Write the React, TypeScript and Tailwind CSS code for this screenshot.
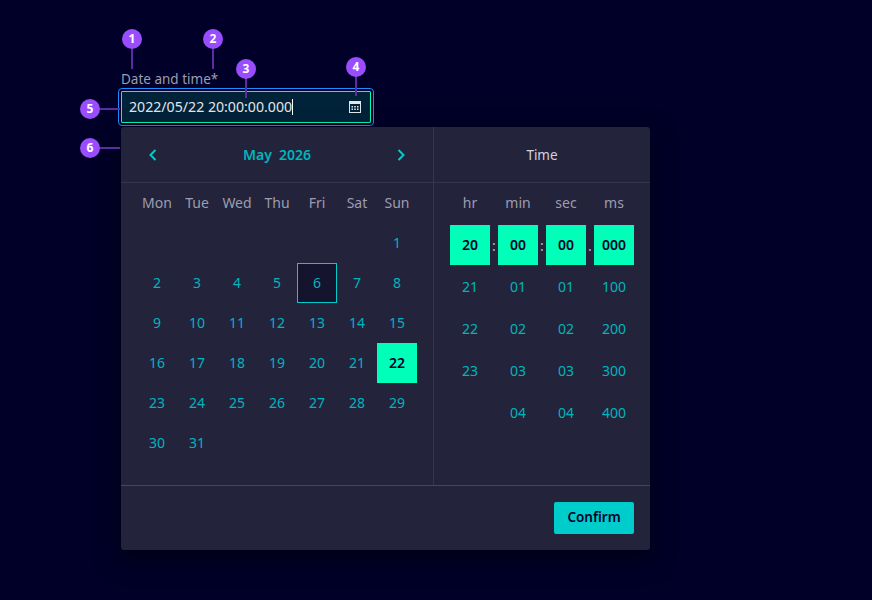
const days = ["Mon", "Tue", "Wed", "Thu", "Fri", "Sat", "Sun"];

const weeks = [
  ["", "", "", "", "", "", "1"],
  ["2", "3", "4", "5", "6", "7", "8"],
  ["9", "10", "11", "12", "13", "14", "15"],
  ["16", "17", "18", "19", "20", "21", "22"],
  ["23", "24", "25", "26", "27", "28", "29"],
  ["30", "31", "", "", "", "", ""],
];

const timeCols = [
  { label: "hr", sep: ":", values: ["20", "21", "22", "23", ""] },
  { label: "min", sep: ":", values: ["00", "01", "02", "03", "04"] },
  { label: "sec", sep: ".", values: ["00", "01", "02", "03", "04"] },
  { label: "ms", sep: "", values: ["000", "100", "200", "300", "400"] },
];

function Marker({ n, className }: { n: number; className: string }) {
  return (
    <div className={`absolute w-5 h-5 rounded-full bg-[#9a4dff] text-white text-[12px] font-bold flex items-center justify-center ${className}`}>
      {n}
    </div>
  );
}

function Line({ className }: { className: string }) {
  return <div className={`absolute bg-[#5b2d9e] ${className}`} />;
}

function DayCell({ value }: { value: string }) {
  if (value === "22") {
    return (
      <div className="w-10 h-10 pb-[2px] flex items-center justify-center bg-[#00ffb9] text-[#000028] font-semibold">
        {value}
      </div>
    );
  }
  if (value === "6") {
    return (
      <div className="w-10 h-10 pb-[2px] flex items-center justify-center bg-[#15142f] border border-[#00cccc] text-[#00b5bd]">
        {value}
      </div>
    );
  }
  return <div className="w-10 h-10 pb-[2px] flex items-center justify-center text-[#00b5bd]">{value}</div>;
}

function CalendarIcon() {
  return (
    <svg width="12" height="12" viewBox="0 0 12 12" className="text-[#e6e6ea]">
      <path
        fill="currentColor"
        fillRule="evenodd"
        d="M0 0h12v12H0V0Zm1 3v8h10V3H1Z"
      />
      <path
        fill="currentColor"
        d="M2.5 5h1.5v1.5H2.5zM5.2 5h1.6v1.5H5.2zM8 5h1.5v1.5H8zM2.5 7.5h1.5V9H2.5zM5.2 7.5h1.6V9H5.2zM8 7.5h1.5V9H8z"
      />
    </svg>
  );
}

function Chevron({ dir }: { dir: "left" | "right" }) {
  return (
    <svg width="8" height="12" viewBox="0 0 8 12" fill="none" stroke="#00cccc" strokeWidth="2">
      <path d={dir === "left" ? "M6.5 1 1.5 6l5 5" : "M1.5 1l5 5-5 5"} />
    </svg>
  );
}

export default function App() {
  return (
    <main className="relative w-[872px] h-[600px] overflow-hidden bg-[#000028] text-[14px] font-['Noto_Sans',sans-serif]">
      <div className="pl-[121px] pt-[71px]">
        <label className="block h-[18px] leading-[16px] text-[13.5px] text-[#9d9daf]">Date and time*</label>

        {/* Input */}
        <div className="mt-[2px] w-[250px] h-[32px] border border-[#00ffb9] bg-[#00233a] rounded-[1px] outline outline-offset-2 outline-[#1a8cff] pl-[7px] pr-[9px] flex items-center justify-between text-[#e6e6ea]">
          <span className="flex items-center text-[14.15px]">
            2022/05/22 20:00:00.000
            <span className="inline-block w-px h-[16px] bg-white" />
          </span>
          <CalendarIcon />
        </div>

        {/* Picker */}
        <div className="relative mt-[4px] w-[529px] h-[423px] bg-[#23233c] rounded-[3px] shadow-[0_8px_24px_rgba(0,0,0,0.5)] flex flex-col">
          <div className="flex h-[359px] border-b border-[#45455e]">
            <div className="w-[313px] border-r border-[#35354f] flex flex-col shrink-0">
              <div className="h-[56px] border-b border-[#35354f] flex items-center justify-between pl-[28px] pr-[28px] shrink-0">
                <Chevron dir="left" />
                <div className="font-semibold text-[14px] text-[#00b5bd] flex gap-[7px]">
                  <span>May</span>
                  <span>2026</span>
                </div>
                <Chevron dir="right" />
              </div>
              <div className="pl-[16px]">
                <div className="flex h-[40px]">
                  {days.map((d) => (
                    <div key={d} className="w-10 pb-[2px] flex items-center justify-center text-[#9d9daf]">
                      {d}
                    </div>
                  ))}
                </div>
                {weeks.map((w, i) => (
                  <div key={i} className="flex">
                    {w.map((v, j) => (
                      <DayCell key={j} value={v} />
                    ))}
                  </div>
                ))}
              </div>
            </div>

            <div className="flex-1 flex flex-col">
              <div className="h-[56px] pt-[2px] border-b border-[#35354f] flex items-center justify-center text-[13.5px] text-[#d3d3dc] shrink-0">
                Time
              </div>
              <div className="flex pl-[16px] gap-2">
                {timeCols.map((c) => (
                  <div key={c.label} className="w-10 relative">
                    <div className="h-[40px] pb-[2px] flex items-center justify-center text-[#9d9daf]">{c.label}</div>
                    <div className="mt-[2px] h-10 pb-[2px] bg-[#00ffb9] text-[#000028] font-semibold flex items-center justify-center">
                      {c.values[0]}
                    </div>
                    {c.sep && (
                      <span className="absolute left-[40px] top-[42px] w-2 h-10 flex items-center justify-center text-[#b9b9c5]">
                        {c.sep}
                      </span>
                    )}
                    {c.values.slice(1).map((v, i) => (
                      <div key={i} className={`h-[42px] pb-[2px] flex items-center justify-center text-[#00b5bd] ${i === 0 ? "mt-[1px]" : ""}`}>
                        {v}
                      </div>
                    ))}
                  </div>
                ))}
              </div>
            </div>
          </div>

          <div className="flex-1 flex justify-end pt-[16px] pr-[16px]">
            <button className="w-[80px] h-[32px] pb-[1px] bg-[#00cccc] rounded-[2px] text-[#000028] font-semibold text-[13.5px]">
              Confirm
            </button>
          </div>
        </div>
      </div>

      {/* Annotations */}
      <Line className="left-[131px] top-[49px] w-[2px] h-[20px]" />
      <Line className="left-[212px] top-[49px] w-[2px] h-[20px]" />
      <Line className="left-[245px] top-[78px] w-[2px] h-[20px]" />
      <Line className="left-[355px] top-[76px] w-[2px] h-[20px]" />
      <Line className="left-[100px] top-[108px] w-[20px] h-[2px]" />
      <Line className="left-[100px] top-[147px] w-[20px] h-[2px]" />
      <Marker n={1} className="left-[122px] top-[29px]" />
      <Marker n={2} className="left-[203px] top-[29px]" />
      <Marker n={3} className="left-[236px] top-[59px]" />
      <Marker n={4} className="left-[346px] top-[57px]" />
      <Marker n={5} className="left-[80px] top-[99px]" />
      <Marker n={6} className="left-[80px] top-[138px]" />
    </main>
  );
}
